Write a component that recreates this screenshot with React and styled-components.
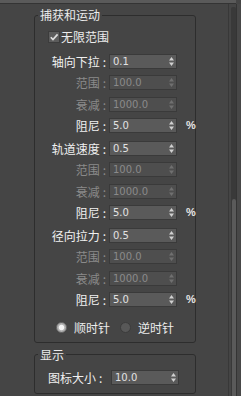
import React from "react";
import styled, { createGlobalStyle } from "styled-components";

const GlobalStyle = createGlobalStyle`
  html, body { margin: 0; padding: 0; background: #454545; }
  body { font-family: "Noto Sans CJK SC", "Noto Sans", sans-serif; }
`;

const Frame = styled.div`
  width: 241px;
  height: 396px;
  overflow: hidden;
  display: flex;
  flex-direction: column;
  background: #454545;
`;

const TopStrip = styled.div`
  flex-shrink: 0;
  width: 236px;
  height: 3px;
  background: #5a5a5a;
  border-bottom: 1px solid #343434;
`;

const Body = styled.div`
  display: flex;
  flex: 1;
  min-height: 0;
`;

const Panel = styled.div`
  width: 229px;
  box-sizing: border-box;
  border-right: 1px solid #383838;
  display: flex;
  flex-direction: column;
`;

const Group = styled.fieldset`
  margin: ${(p) => p.$top}px 0 0 34px;
  width: 162px;
  box-sizing: border-box;
  border: 1px solid #2d2d2d;
  border-radius: 3px;
  padding: ${(p) => p.$padTop}px 0 ${(p) => p.$padBottom}px 0;
  min-width: 0;
`;

const Legend = styled.legend`
  margin-left: 3px;
  padding: 0 2px;
  font-size: 12px;
  line-height: 16px;
  color: #ececec;
`;

const CheckRow = styled.label`
  display: flex;
  align-items: center;
  gap: 1px;
  height: 15px;
  margin-left: 13px;
  font-size: 12px;
  color: #ececec;
`;

const CheckBox = styled.span`
  width: 12px;
  height: 12px;
  box-sizing: border-box;
  background: #5c5c5c;
  border: 1px solid #3c3c3c;
  display: flex;
  align-items: center;
  justify-content: center;
`;

const Rows = styled.div`
  margin-top: 10px;
  display: flex;
  flex-direction: column;
  gap: 8px;
`;

const SubGroup = styled.div`
  display: grid;
  grid-template-columns: 71px 68px auto;
  grid-auto-rows: 15px;
  column-gap: 3px;
  row-gap: 6.33px;
  align-items: center;
`;

const Label = styled.span`
  text-align: right;
  font-size: 12px;
  line-height: 15px;
  white-space: nowrap;
  color: ${(p) => (p.$disabled ? "#8a8a8a" : "#f0f0f0")};
`;

const Colon = styled.span`
  padding-left: 3px;
`;

const Spinner = styled.div`
  grid-column: 2;
  width: 68px;
  height: 15px;
  box-sizing: border-box;
  border: 1px solid #3a3a3a;
  background: ${(p) => (p.$disabled ? "#4e4e4e" : "#5a5a5a")};
  display: flex;
  align-items: center;
  padding-left: 3px;
  font-family: "DejaVu Sans", "Liberation Sans", sans-serif;
  font-size: 10px;
  color: ${(p) => (p.$disabled ? "#8a8a8a" : "#e2e2e2")};
`;

const Value = styled.span`
  flex: 1;
  line-height: 13px;
`;

const ArrowIcon = styled.svg`
  margin-right: 2px;
  flex-shrink: 0;
`;

const Percent = styled.span`
  grid-column: 3;
  margin-left: 6px;
  font-family: "Liberation Sans", Arial, sans-serif;
  font-size: 11px;
  font-weight: bold;
  color: #e6e6e6;
`;

const RadioRow = styled.div`
  display: flex;
  align-items: center;
  height: 15px;
  margin: 13px 0 0 21px;
`;

const RadioItem = styled.label`
  display: flex;
  align-items: center;
  gap: 7px;
  margin-right: 10px;
  font-size: 12px;
  color: #ececec;
`;

const RadioDot = styled.span`
  width: 11px;
  height: 11px;
  box-sizing: border-box;
  border-radius: 50%;
  border: 1px solid ${(p) => (p.$checked ? "#6e6e6e" : "#3c3c3c")};
  background: ${(p) =>
    p.$checked
      ? "radial-gradient(circle, #f4f4f4 0 2.2px, #b4b4b4 3.2px, #9a9a9a 100%)"
      : "#585858"};
`;

const DisplayRow = styled.div`
  display: grid;
  grid-template-columns: 60px 68px;
  column-gap: 3px;
  align-items: center;
  height: 15px;
  margin-left: 13px;
`;

const DisplayLabel = styled.span`
  font-size: 12px;
  line-height: 15px;
  white-space: nowrap;
  color: #f0f0f0;
`;

const ScrollColumn = styled.div`
  display: flex;
  width: 12px;
`;

const ScrollGap = styled.div`
  width: 2px;
`;

const Track = styled.div`
  width: 5px;
  margin-top: 3px;
  background: #393939;
  border-radius: 2px 2px 0 0;
  display: flex;
  flex-direction: column;
`;

const Thumb = styled.div`
  margin-top: 192px;
  margin-left: 1px;
  flex: 1;
  background: #5a5a5a;
  border-radius: 2px 2px 0 0;
`;

const ScrollLine = styled.div`
  width: 1px;
  background: #343434;
`;

const ScrollRest = styled.div`
  flex: 1;
  background: #484848;
`;

const Arrows = ({ disabled }) => {
  const c = disabled ? "#707070" : "#d0d0d0";
  return (
    <ArrowIcon width="5" height="9" viewBox="0 0 5 9">
      <polygon points="2.5,0 5,3.5 0,3.5" fill={c} />
      <polygon points="0,5.5 5,5.5 2.5,9" fill={c} />
    </ArrowIcon>
  );
};

const Field = ({ value, disabled }) => (
  <Spinner $disabled={disabled}>
    <Value>{value}</Value>
    <Arrows disabled={disabled} />
  </Spinner>
);

const groups = [
  { title: "轴向下拉", value: "0.1" },
  { title: "轨道速度", value: "0.5" },
  { title: "径向拉力", value: "0.5" },
];

const Row = ({ label, value, disabled, percent }) => (
  <>
    <Label $disabled={disabled}>
      {label}
      <Colon>:</Colon>
    </Label>
    <Field value={value} disabled={disabled} />
    {percent ? <Percent>%</Percent> : <span />}
  </>
);

export default function App() {
  return (
    <>
      <GlobalStyle />
      <Frame>
        <TopStrip />
        <Body>
          <Panel>
            <Group $top={3} $padTop={6} $padBottom={7}>
              <Legend>捕获和运动</Legend>
              <CheckRow>
                <CheckBox>
                  <svg width="10" height="10" viewBox="0 0 10 10">
                    <polyline
                      points="1.8,5.2 4,7.6 8.6,2.4"
                      fill="none"
                      stroke="#dedede"
                      strokeWidth="1.7"
                    />
                  </svg>
                </CheckBox>
                无限范围
              </CheckRow>
              <Rows>
                {groups.map((g) => (
                  <SubGroup key={g.title}>
                    <Row label={g.title} value={g.value} />
                    <Row label="范围" value="100.0" disabled />
                    <Row label="衰减" value="1000.0" disabled />
                    <Row label="阻尼" value="5.0" percent />
                  </SubGroup>
                ))}
              </Rows>
              <RadioRow>
                <RadioItem>
                  <RadioDot $checked />
                  顺时针
                </RadioItem>
                <RadioItem>
                  <RadioDot />
                  逆时针
                </RadioItem>
              </RadioRow>
            </Group>
            <Group $top={4} $padTop={7} $padBottom={8}>
              <Legend>显示</Legend>
              <DisplayRow>
                <DisplayLabel>
                  图标大小
                  <Colon>:</Colon>
                </DisplayLabel>
                <Field value="10.0" />
              </DisplayRow>
            </Group>
          </Panel>
          <ScrollColumn>
            <ScrollGap />
            <Track>
              <Thumb />
            </Track>
            <ScrollLine />
            <ScrollRest />
          </ScrollColumn>
        </Body>
      </Frame>
    </>
  );
}
